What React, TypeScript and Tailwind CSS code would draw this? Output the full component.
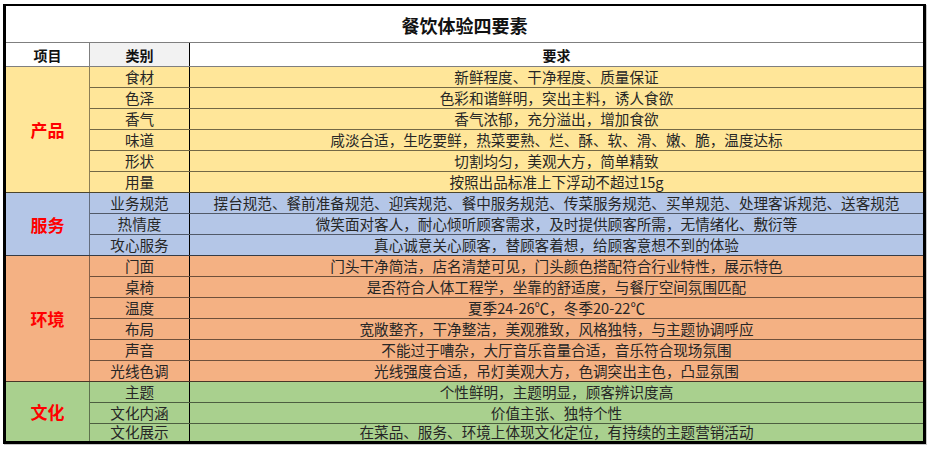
import React from 'react';

type Section = {
  name: string;
  bg: string;
  rows: [string, string][];
};

const sections: Section[] = [
  {
    name: '产品',
    bg: 'bg-[#ffe699]',
    rows: [
      ['食材', '新鲜程度、干净程度、质量保证'],
      ['色泽', '色彩和谐鲜明，突出主料，诱人食欲'],
      ['香气', '香气浓郁，充分溢出，增加食欲'],
      ['味道', '咸淡合适，生吃要鲜，热菜要熟、烂、酥、软、滑、嫩、脆，温度达标'],
      ['形状', '切割均匀，美观大方，简单精致'],
      ['用量', '按照出品标准上下浮动不超过15g'],
    ],
  },
  {
    name: '服务',
    bg: 'bg-[#b4c6e7]',
    rows: [
      ['业务规范', '摆台规范、餐前准备规范、迎宾规范、餐中服务规范、传菜服务规范、买单规范、处理客诉规范、送客规范'],
      ['热情度', '微笑面对客人，耐心倾听顾客需求，及时提供顾客所需，无情绪化、敷衍等'],
      ['攻心服务', '真心诚意关心顾客，替顾客着想，给顾客意想不到的体验'],
    ],
  },
  {
    name: '环境',
    bg: 'bg-[#f4b183]',
    rows: [
      ['门面', '门头干净简洁，店名清楚可见，门头颜色搭配符合行业特性，展示特色'],
      ['桌椅', '是否符合人体工程学，坐靠的舒适度，与餐厅空间氛围匹配'],
      ['温度', '夏季24-26℃，冬季20-22℃'],
      ['布局', '宽敞整齐，干净整洁，美观雅致，风格独特，与主题协调呼应'],
      ['声音', '不能过于嘈杂，大厅音乐音量合适，音乐符合现场氛围'],
      ['光线色调', '光线强度合适，吊灯美观大方，色调突出主色，凸显氛围'],
    ],
  },
  {
    name: '文化',
    bg: 'bg-[#a9d08e]',
    rows: [
      ['主题', '个性鲜明，主题明显，顾客辨识度高'],
      ['文化内涵', '价值主张、独特个性'],
      ['文化展示', '在菜品、服务、环境上体现文化定位，有持续的主题营销活动'],
    ],
  },
];

export default function App() {
  return (
    <div className="w-[932px] h-[450px] bg-white pt-[4px] pl-[3px] font-['Noto_Sans_CJK_SC','Noto_Sans',sans-serif] text-[#262626]">
      <div className="w-[923px] border-[3px] border-t-2 border-black shadow-[1px_1px_0_#c8c8c8]">
        {/* Title */}
        <div className="h-[37px] flex items-center justify-center border-b border-[#7f7f7f] text-[18px] font-bold leading-none pt-[1px] text-[#111]">
          餐饮体验四要素
        </div>

        {/* Header */}
        <div className="h-[24px] flex border-b border-[#7f7f7f] text-[14px] font-bold leading-none text-[#111]">
          <div className="w-[84px] flex items-center justify-center border-r border-[#7f7f7f]">项目</div>
          <div className="w-[100px] flex items-center justify-center bg-[#f2f2f2] border-r border-black">类别</div>
          <div className="flex-1 flex items-center justify-center">要求</div>
        </div>

        {sections.map((s, si) => (
          <div
            key={s.name}
            className={`flex ${s.bg} ${si < sections.length - 1 ? 'border-b border-black/70' : ''}`}
          >
            <div className="w-[84px] flex items-center justify-center border-r border-black/45 text-[17px] font-bold text-[#ff0000] leading-none">
              {s.name}
            </div>
            <div className="flex-1 flex flex-col">
              {s.rows.map(([cat, req], ri) => (
                <div
                  key={cat}
                  className={`flex text-[14.6px] leading-none ${ri < s.rows.length - 1 ? 'h-[21px] border-b border-black/55' : si === sections.length - 1 ? 'h-[17px]' : 'h-[20px]'}`}
                >
                  <div className="w-[100px] flex items-center justify-center border-r border-black">{cat}</div>
                  <div className="flex-1 flex items-center justify-center whitespace-nowrap">{req}</div>
                </div>
              ))}
            </div>
          </div>
        ))}
      </div>
    </div>
  );
}
